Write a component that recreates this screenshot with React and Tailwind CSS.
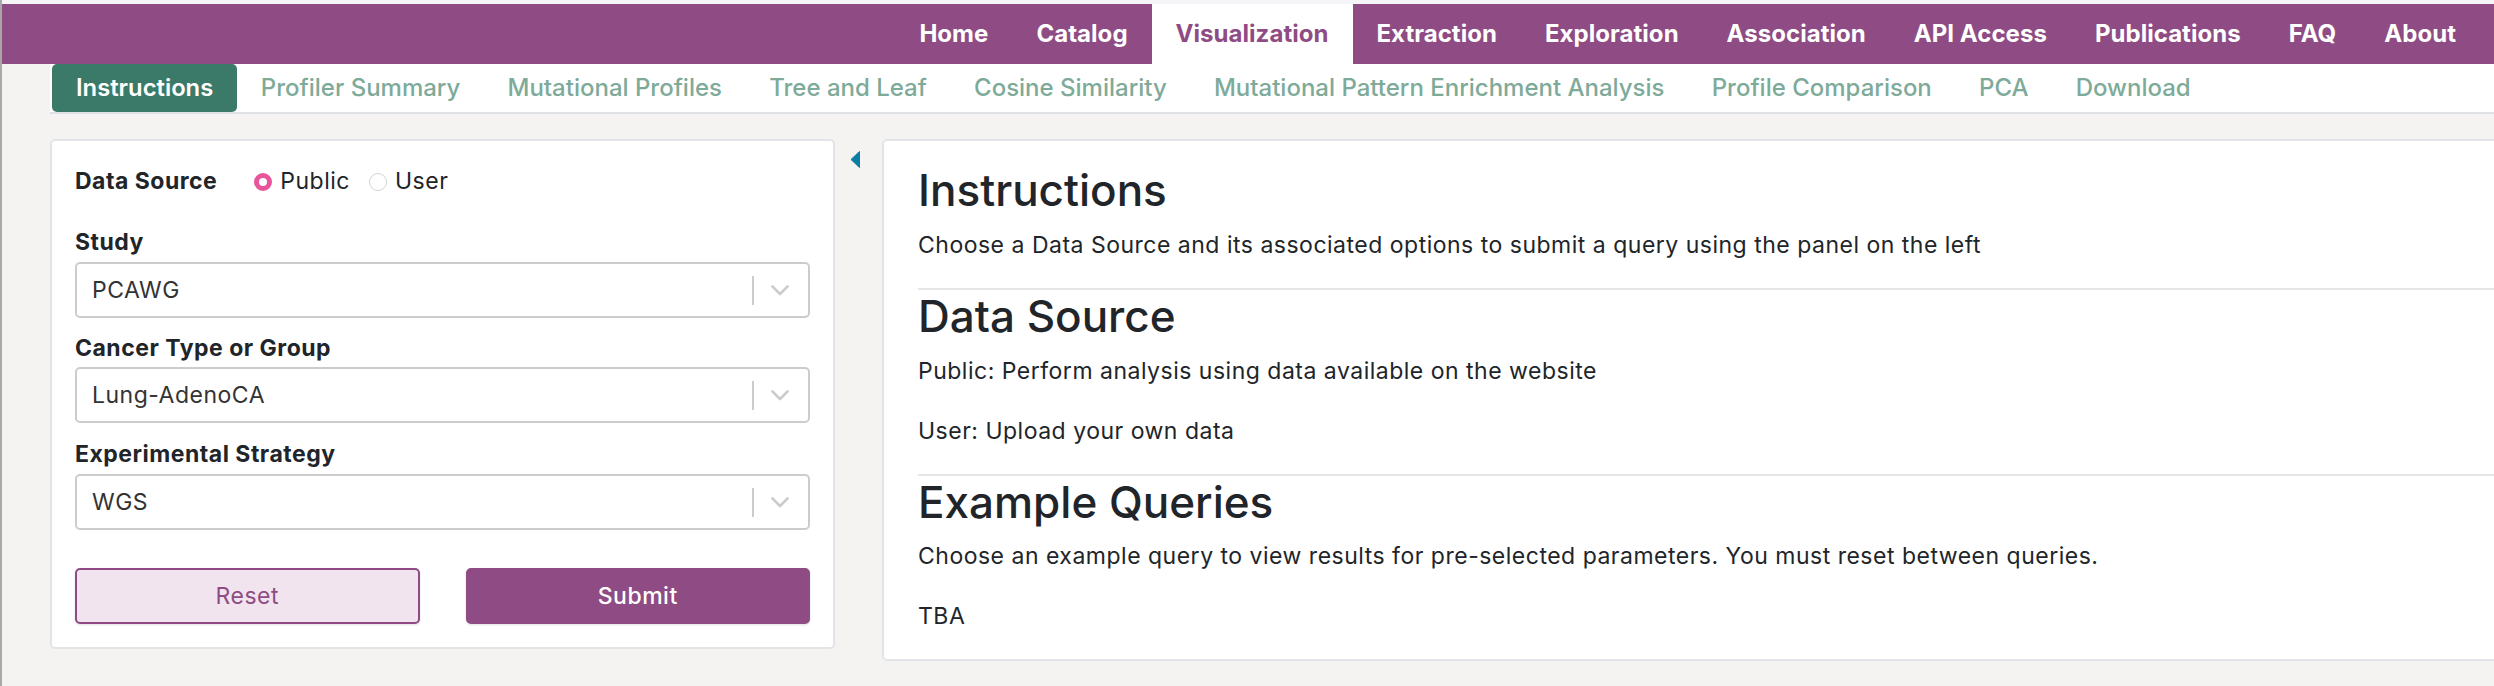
import React from 'react';

const topNav = ['Home', 'Catalog', 'Visualization', 'Extraction', 'Exploration', 'Association', 'API Access', 'Publications', 'FAQ', 'About'];
const subNav = ['Instructions', 'Profiler Summary', 'Mutational Profiles', 'Tree and Leaf', 'Cosine Similarity', 'Mutational Pattern Enrichment Analysis', 'Profile Comparison', 'PCA', 'Download'];

const Select = ({ value }) => (
  <div className="h-[56px] border-2 border-[#cccccc] rounded-[5px] bg-white flex items-center">
    <div className="flex-1 pl-[15px] text-[23px] tracking-[0.5px] text-[#333333] leading-[33px]">{value}</div>
    <div className="w-[2px] h-[29px] bg-[#cccccc]" />
    <div className="pl-[17px] pr-[19px] flex items-center">
      <svg width="18" height="11" viewBox="0 0 18 11" fill="none">
        <path d="M1.5 1.5 L9 9 L16.5 1.5" stroke="#cccccc" strokeWidth="2.6" strokeLinecap="round" strokeLinejoin="round" />
      </svg>
    </div>
  </div>
);

const App = () => {
  return (
    <div className="min-h-screen w-full overflow-hidden bg-[#f4f3f2] border-l-2 border-[#a8a8a8] font-[Inter,sans-serif] text-[#212529]">
      {/* top strip + main nav */}
      <div className="h-[4px] bg-[#f5f5f8]" />
      <nav className="h-[60px] bg-[#8f4c84] flex justify-end pr-[14px]">
        {topNav.map((item) => (
          <div
            key={item}
            className={
              item === 'Visualization'
                ? 'h-full flex items-center px-6 text-[24px] font-bold tracking-[0.04px] bg-white text-[#8f4c84]'
                : 'h-full flex items-center px-6 text-[24px] font-bold tracking-[0.04px] text-white'
            }
          >
            {item}
          </div>
        ))}
      </nav>

      {/* sub nav */}
      <div className="ml-[48px] h-[50px] bg-white border-b-2 border-[#dfe1e4] flex pl-[2px]">
        {subNav.map((item) => (
          <div
            key={item}
            className={
              item === 'Instructions'
                ? 'flex items-center px-6 text-[23.8px] font-semibold text-white bg-[#3b7a68] rounded-[5px]'
                : 'flex items-center px-[23.6px] text-[24px] font-medium text-[#7eaa99]'
            }
          >
            {item}
          </div>
        ))}
      </div>

      {/* content */}
      <div className="flex items-start ml-[48px] pt-[25px]">
        {/* sidebar */}
        <div className="w-[785px] shrink-0 bg-white border-2 border-[#e2e4e8] rounded-[5px] px-[23px] pt-[24px] pb-[23px] text-[23px] tracking-[0.5px]">
          <div className="flex items-center h-[33px]">
            <span className="font-bold">Data Source</span>
            <span className="ml-[37px] w-[18px] h-[18px] rounded-full border-[5px] border-[#e8559a] bg-white" />
            <span className="ml-[8px]">Public</span>
            <span className="ml-[19px] w-[18px] h-[18px] rounded-full border border-[#d4d4d4] bg-white" />
            <span className="ml-[8px]">User</span>
          </div>

          <div className="mt-[28px] mb-[3px] leading-[33px] font-bold">Study</div>
          <Select value="PCAWG" />

          <div className="mt-[14px] mb-[2px] leading-[33px] font-bold">Cancer Type or Group</div>
          <Select value="Lung-AdenoCA" />

          <div className="mt-[15px] mb-[3px] leading-[33px] font-bold">Experimental Strategy</div>
          <Select value="WGS" />

          <div className="mt-[38px] grid grid-cols-2 gap-[46px]">
            <button className="h-[56px] rounded-[5px] border-2 border-[#8f4c84] bg-[#f1e4ee] text-[#8f4c84] tracking-[0.5px] shadow-sm">
              Reset
            </button>
            <button className="h-[56px] rounded-[5px] border-2 border-[#8f4c84] bg-[#8f4c84] text-white font-medium tracking-[0.5px] shadow-sm">
              Submit
            </button>
          </div>
        </div>

        {/* collapse toggle */}
        <div className="w-[47px] shrink-0 pt-[12px] pl-[15px]">
          <svg width="10" height="17" viewBox="0 0 10 17">
            <path d="M9.5 0.5 L1 8.5 L9.5 16.5 Z" fill="#0a7ea4" stroke="#0a7ea4" strokeLinejoin="round" />
          </svg>
        </div>

        {/* main panel */}
        <div className="w-[1660px] shrink-0 bg-white border-2 border-[#e2e4e8] rounded-[5px] pl-[34px] pr-[40px] pt-[23px]">
          <h2 className="text-[44px] font-medium leading-[1.2] mb-[12px]">Instructions</h2>
          <p className="text-[23px] tracking-[0.5px] leading-[33px] mb-[26px]">
            Choose a Data Source and its associated options to submit a query using the panel on the left
          </p>
          <hr className="border-0 h-[2px] bg-[#e6e6e6]" />
          <h2 className="text-[44px] font-medium leading-[1.2] mb-[12px]">Data Source</h2>
          <p className="text-[23px] tracking-[0.5px] leading-[33px] mb-[27px]">Public: Perform analysis using data available on the website</p>
          <p className="text-[23px] tracking-[0.5px] leading-[33px] mb-[26px]">User: Upload your own data</p>
          <hr className="border-0 h-[2px] bg-[#e6e6e6]" />
          <h2 className="text-[44px] font-medium leading-[1.2] mb-[12px]">Example Queries</h2>
          <p className="text-[23px] tracking-[0.5px] leading-[33px] mb-[27px]">
            Choose an example query to view results for pre-selected parameters. You must reset between queries.
          </p>
          <p className="text-[23px] tracking-[0.5px] leading-[33px] mb-[26px]">TBA</p>
        </div>
      </div>
    </div>
  );
};

export default App;
